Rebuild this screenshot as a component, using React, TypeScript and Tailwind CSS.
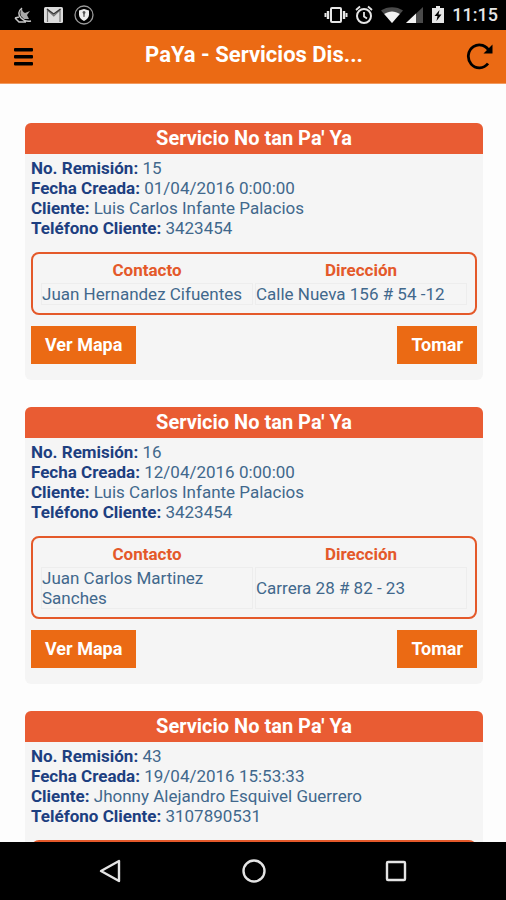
type Servicio = {
  remision: string
  fecha: string
  cliente: string
  telefono: string
  contacto?: string
  direccion?: string
}

const servicios: Servicio[] = [
  {
    remision: '15',
    fecha: '01/04/2016 0:00:00',
    cliente: 'Luis Carlos Infante Palacios',
    telefono: '3423454',
    contacto: 'Juan Hernandez Cifuentes',
    direccion: 'Calle Nueva 156 # 54 -12',
  },
  {
    remision: '16',
    fecha: '12/04/2016 0:00:00',
    cliente: 'Luis Carlos Infante Palacios',
    telefono: '3423454',
    contacto: 'Juan Carlos Martinez Sanches',
    direccion: 'Carrera 28 # 82 - 23',
  },
  {
    remision: '43',
    fecha: '19/04/2016 15:53:33',
    cliente: 'Jhonny Alejandro Esquivel Guerrero',
    telefono: '3107890531',
  },
]

function StatusBar() {
  return (
    <div className="flex h-[30px] shrink-0 items-center justify-between bg-black pr-2 pl-3 text-[#e6e6e6]">
      <div className="flex items-center gap-2">
        <svg className="h-5 w-6" viewBox="0 0 24 20">
          <path d="M10 3c0 3 1 4 3 5l5-2-3 4 2 4-5 0-3-3c-1-3-1-5 1-8z" fill="#a8a8a8" />
          <path d="M10 3C6 6 6 10 9 13c3 3 6 4 10 3M3 13l4 4h7M3 13l4-1" fill="none" stroke="#c8c8c8" strokeWidth="1.500" />
        </svg>
        <svg className="h-5 w-5" viewBox="0 0 20 20">
          <rect x="0" y="2" width="19" height="16" rx="1.5" fill="#dcdcdc" />
          <path d="M3.500 17V5l6.300 6L16 5v12" fill="none" stroke="#777" strokeWidth="1.200" />
          <path d="M3 4l6.700 5L16.500 4" fill="none" stroke="#333" strokeWidth="1.400" />
        </svg>
        <svg className="ml-0.5 h-5 w-5" viewBox="0 0 20 20">
          <circle cx="10" cy="10" r="9" fill="none" stroke="#999" strokeWidth="1.300" />
          <path d="M10 4l5 1.500v4c0 3-2 5-5 6.500-3-1.500-5-3.500-5-6.500v-4z" fill="#eee" />
          <path d="M8.500 7.500a1.500 1.500 0 1 1 2.300 1.300L10.500 12h-1l-.3-3.200z" fill="#555" />
        </svg>
      </div>
      <div className="flex items-center">
        <svg className="h-5 w-6" viewBox="0 0 24 20" fill="none" stroke="currentColor">
          <rect x="7" y="3" width="10" height="14" rx="1" strokeWidth="2" />
          <path d="M4 6v8M20 6v8" strokeWidth="2.400" />
          <path d="M1.500 8v4M22.500 8v4" strokeWidth="2" />
        </svg>
        <svg className="ml-1.5 h-5 w-5" viewBox="0 0 20 20" fill="none" stroke="currentColor">
          <circle cx="10" cy="11" r="7" strokeWidth="2" />
          <path d="M10 7v4.500l3 2M2 5l4-3.500M18 5l-4-3.500" strokeWidth="1.800" />
        </svg>
        <svg className="ml-1.5 h-5 w-6" viewBox="0 0 24 20">
          <path d="M12 18L1 5.500C7 1 17 1 23 5.500z" fill="#4a4a4a" />
          <path d="M12 18L4.200 9C9 5.500 15 5.500 19.800 9z" fill="#f2f2f2" />
        </svg>
        <svg className="h-5 w-5" viewBox="0 0 20 20">
          <path d="M19 2v16H2z" fill="#4a4a4a" />
          <path d="M12 8.500V18H2z" fill="#f2f2f2" />
        </svg>
        <svg className="ml-1 h-5 w-5" viewBox="0 0 20 20">
          <path d="M8 1h4v2h4v15H4V3h4z" fill="#e6e6e6" />
          <path d="M11.500 5l-5 6H9.500l-1 5 5-6.500h-3z" fill="#000" />
        </svg>
        <span className="ml-1 text-lg leading-5 font-medium">11:15</span>
      </div>
    </div>
  )
}

function Header() {
  return (
    <header className="flex h-[54px] shrink-0 items-center justify-between border-b border-[#f29a5f] bg-[#eb6a14] px-3">
      <button type="button" aria-label="Menú" className="text-black">
        <svg className="h-6 w-6" viewBox="0 0 24 24" fill="currentColor">
          <rect x="2" y="3" width="19" height="3.500" rx="1" />
          <rect x="2" y="10" width="19" height="3.500" rx="1" />
          <rect x="2" y="17" width="19" height="3.500" rx="1" />
        </svg>
      </button>
      <h1 className="pb-1 pl-1.5 text-[22px] leading-6 font-bold text-white">PaYa - Servicios Dis...</h1>
      <button type="button" aria-label="Actualizar" className="text-black">
        <svg className="h-7 w-7" viewBox="0 0 28 28" fill="none" stroke="currentColor">
          <path d="M22 20.500A11 11.500 0 1 1 23.500 9" strokeWidth="2.800" />
          <path d="M26.500 1.500v9H17.500z" fill="currentColor" stroke="none" />
        </svg>
      </button>
    </header>
  )
}

function Dato({ label, value }: { label: string; value: string }) {
  return (
    <p>
      <strong className="font-bold text-[#1d3f80]">{label}:</strong> {value}
    </p>
  )
}

function ServicioCard({ servicio }: { servicio: Servicio }) {
  return (
    <article className="shrink-0 overflow-hidden rounded-md bg-[#f5f5f5] text-[17px] leading-5 text-[#41688c]">
      <h2 className="bg-[#e95c33] pt-[5px] pb-1.5 text-center text-xl leading-5 font-bold text-white">
        Servicio No tan Pa' Ya
      </h2>
      <div className="px-1.5 pt-1 pb-4">
        <Dato label="No. Remisión" value={servicio.remision} />
        <Dato label="Fecha Creada" value={servicio.fecha} />
        <Dato label="Cliente" value={servicio.cliente} />
        <Dato label="Teléfono Cliente" value={servicio.telefono} />

        <div className="mt-3.5 rounded-lg border-2 border-[#e4592a] px-1.5 pt-1.5 pb-2">
          <table className="w-full table-fixed border-separate border-spacing-x-0.5 border-spacing-y-0">
            <thead>
              <tr className="text-[#e4592a]">
                <th className="pb-[3px] font-bold">Contacto</th>
                <th className="pb-[3px] font-bold">Dirección</th>
              </tr>
            </thead>
            <tbody>
              <tr>
                <td className="border border-[#ededed]">{servicio.contacto}</td>
                <td className="border border-[#ededed]">{servicio.direccion}</td>
              </tr>
            </tbody>
          </table>
        </div>

        <div className="mt-[11px] flex justify-between text-lg leading-5 font-bold text-white">
          <button type="button" className="bg-[#eb6a14] px-3.5 py-[9px]">
            Ver Mapa
          </button>
          <button type="button" className="bg-[#eb6a14] px-3.5 py-[9px]">
            Tomar
          </button>
        </div>
      </div>
    </article>
  )
}

function NavBar() {
  return (
    <nav className="flex h-[58px] shrink-0 items-center justify-center gap-[114px] bg-black pl-0.5 text-[#e4e4e4]">
      <button type="button" aria-label="Atrás">
        <svg className="h-7 w-7" viewBox="0 0 28 28" fill="none" stroke="currentColor" strokeWidth="2.400">
          <path d="M21 4v20L3 14z" strokeLinejoin="round" />
        </svg>
      </button>
      <button type="button" aria-label="Inicio">
        <svg className="h-7 w-7" viewBox="0 0 28 28" fill="none" stroke="currentColor" strokeWidth="2.400">
          <circle cx="14" cy="14" r="10.500" />
        </svg>
      </button>
      <button type="button" aria-label="Recientes">
        <svg className="h-7 w-7" viewBox="0 0 28 28" fill="none" stroke="currentColor" strokeWidth="2.400">
          <rect x="5" y="5" width="18" height="18" rx="1" />
        </svg>
      </button>
    </nav>
  )
}

export default function App() {
  return (
    <div className="flex h-screen flex-col bg-[#fdfdfd] font-['Roboto',sans-serif]">
      <StatusBar />
      <Header />
      <main className="flex min-h-0 flex-1 flex-col gap-[27px] overflow-y-auto pt-[39px] pr-[23px] pl-[25px] [scrollbar-width:none]">
        {servicios.map((servicio) => (
          <ServicioCard key={servicio.remision} servicio={servicio} />
        ))}
      </main>
      <NavBar />
    </div>
  )
}
